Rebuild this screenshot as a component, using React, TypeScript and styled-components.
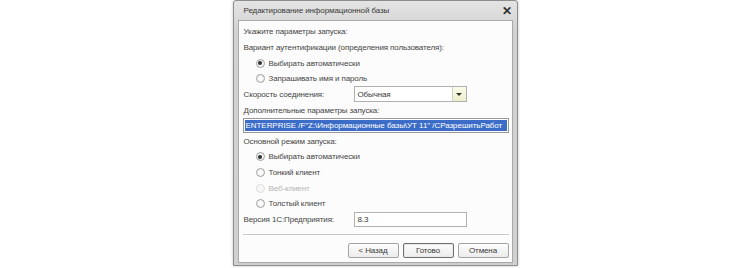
import styled, { createGlobalStyle } from "styled-components";

const GlobalStyle = createGlobalStyle`
  html, body {
    margin: 0;
    padding: 0;
    background: #ffffff;
  }
  body {
    font-family: "Liberation Sans", Arial, sans-serif;
  }
`;

const Page = styled.div`
  width: 750px;
  height: 268px;
  display: flex;
  justify-content: center;
  align-items: flex-start;
  overflow: hidden;
`;

const Window = styled.div`
  width: 285px;
  height: 266px;
  box-sizing: border-box;
  display: flex;
  flex-direction: column;
  background: linear-gradient(#e4e4e4, #d2d2d2 30px, #d0d0d0);
  border: 1px solid #8d8d8d;
  border-radius: 3px 3px 0 0;
  padding: 0 4px 2px;
  box-shadow: 0 0 3px rgba(0, 0, 0, 0.25);
`;

const TitleBar = styled.div`
  height: 19px;
  display: flex;
  align-items: center;
  justify-content: space-between;
  padding: 0 0 0 6px;
  font-size: 8px;
  letter-spacing: -0.1px;
  color: #3a3a3a;
`;

const Close = styled.span`
  font-size: 12px;
  font-weight: bold;
  color: #333;
  line-height: 1;
  margin-right: 1px;
`;

const Body = styled.div`
  flex: 1;
  display: flex;
  flex-direction: column;
  background: #fcfcfc;
  border: 1px solid #a9a9a9;
  padding: 3px 3px 0 4px;
  font-size: 8px;
  letter-spacing: -0.12px;
  color: #454545;
`;

const Row = styled.div<{ $indent?: boolean; $disabled?: boolean }>`
  height: 15.65px;
  display: flex;
  align-items: center;
  gap: 4px;
  padding-left: ${(p) => (p.$indent ? "13px" : "1px")};
  color: ${(p) => (p.$disabled ? "#b4b4b4" : "inherit")};
  white-space: nowrap;
`;

const Radio = styled.span<{ $checked?: boolean; $disabled?: boolean }>`
  width: 9px;
  height: 9px;
  box-sizing: border-box;
  border-radius: 50%;
  border: 1px solid ${(p) => (p.$disabled ? "#dcdcdc" : "#a0a0a0")};
  background: ${(p) =>
    p.$disabled ? "#f7f7f7" : "radial-gradient(#ffffff, #ececec)"};
  display: flex;
  align-items: center;
  justify-content: center;

  &::after {
    content: "";
    width: 4px;
    height: 4px;
    border-radius: 50%;
    background: #2f2f2f;
    display: ${(p) => (p.$checked ? "block" : "none")};
  }
`;

const FieldLabel = styled.span`
  width: 106px;
  flex-shrink: 0;
`;

const Field = styled.div`
  width: 113px;
  height: 15px;
  box-sizing: border-box;
  border: 1px solid #b0b0b0;
  background: #fff;
  display: flex;
  align-items: center;
  padding-left: 3px;
  color: #3a3a3a;
`;

const Select = styled(Field)`
  height: 16px;
  padding-right: 0;
  justify-content: space-between;
`;

const Arrow = styled.span`
  width: 13px;
  height: 14px;
  border-left: 1px solid #d0d0d0;
  background: linear-gradient(#fbfbe8, #eeeecd);
  display: flex;
  align-items: center;
  justify-content: center;

  &::after {
    content: "";
    border-left: 3px solid transparent;
    border-right: 3px solid transparent;
    border-top: 3px solid #333;
  }
`;

const WideInput = styled.div`
  height: 15px;
  box-sizing: border-box;
  width: 268px;
  margin-left: -1px;
  border: 1px solid #9a9a9a;
  background: #fff;
  padding: 1px;
  overflow: hidden;
`;

const Selection = styled.div`
  height: 100%;
  background: #3b6cc7;
  color: #fff;
  font-size: 8px;
  letter-spacing: -0.05px;
  line-height: 11px;
  white-space: nowrap;
  padding-left: 1px;
`;

const Footer = styled.div`
  margin-top: auto;
  display: flex;
  flex-direction: column;
`;

const Separator = styled.div`
  height: 0;
  border-top: 1px solid #c9c9c9;
  border-bottom: 1px solid #ffffff;
  margin: 0 0 7px;
`;

const Buttons = styled.div`
  display: flex;
  justify-content: flex-end;
  gap: 4px;
  padding-bottom: 4px;
`;

const Button = styled.div<{ $default?: boolean }>`
  width: 51px;
  height: 15px;
  box-sizing: border-box;
  border: 1px solid ${(p) => (p.$default ? "#707070" : "#a3a3a3")};
  border-radius: 2px;
  background: linear-gradient(#fdfdfd, #ececec);
  display: flex;
  align-items: center;
  justify-content: center;
  font-size: 8px;
  color: #3a3a3a;
  box-shadow: ${(p) => (p.$default ? "inset 0 0 0 1px #e8e8e8" : "none")};
`;

export default function App() {
  return (
    <>
      <GlobalStyle />
      <Page>
        <Window>
          <TitleBar>
            <span>Редактирование информационной базы</span>
            <Close>✕</Close>
          </TitleBar>
          <Body>
            <Row>Укажите параметры запуска:</Row>
            <Row>Вариант аутентификации (определения пользователя):</Row>
            <Row $indent>
              <Radio $checked />
              Выбирать автоматически
            </Row>
            <Row $indent>
              <Radio />
              Запрашивать имя и пароль
            </Row>
            <Row>
              <FieldLabel>Скорость соединения:</FieldLabel>
              <Select>
                Обычная
                <Arrow />
              </Select>
            </Row>
            <Row>Дополнительные параметры запуска:</Row>
            <Row>
              <WideInput>
                <Selection>
                  ENTERPRISE /F"Z:\Информационные базы\УТ 11" /CРазрешитьРабот
                </Selection>
              </WideInput>
            </Row>
            <Row>Основной режим запуска:</Row>
            <Row $indent>
              <Radio $checked />
              Выбирать автоматически
            </Row>
            <Row $indent>
              <Radio />
              Тонкий клиент
            </Row>
            <Row $indent $disabled>
              <Radio $disabled />
              Веб-клиент
            </Row>
            <Row $indent>
              <Radio />
              Толстый клиент
            </Row>
            <Row>
              <FieldLabel>Версия 1С:Предприятия:</FieldLabel>
              <Field>8.3</Field>
            </Row>
            <Footer>
              <Separator />
              <Buttons>
                <Button>&lt; Назад</Button>
                <Button $default>Готово</Button>
                <Button>Отмена</Button>
              </Buttons>
            </Footer>
          </Body>
        </Window>
      </Page>
    </>
  );
}
